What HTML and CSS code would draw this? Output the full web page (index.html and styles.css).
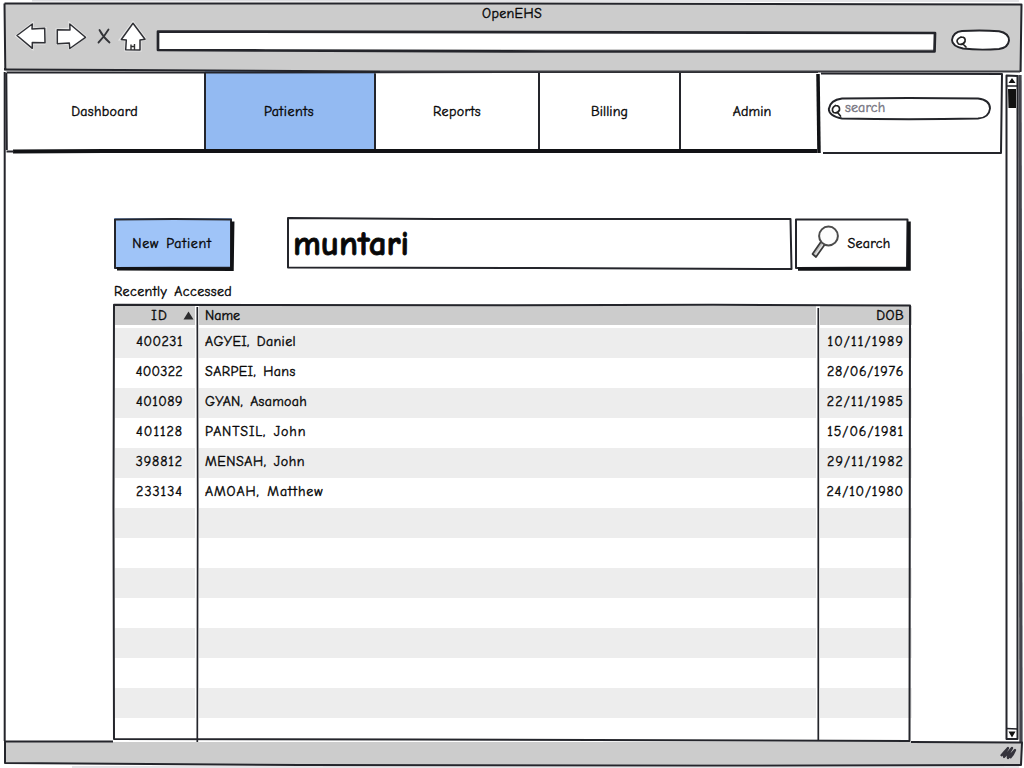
FILE: index.html
```html
<!DOCTYPE html>
<html lang="en">
<head>
<meta charset="utf-8">
<title>OpenEHS</title>
<link rel="stylesheet" href="styles.css">
</head>
<body>
<div class="window">
  <header class="chrome">
    <div class="title t-title">OpenEHS</div>
    <div class="toolbar">
      <svg class="nav-icons" width="132" height="36" viewBox="14 20 132 36">
        <g class="icon-halo"><path d="M17 36 32 24 32 29 45 28.500 44 43 32 43 32 48Z"/><path d="M57 30 70 29 70 24 85 37 70 48 69 43 57.500 43.500Z"/><path d="M133 23 121 39 126 39 126 50 140 50 140 40 145 39Z"/></g>
        <g class="icon"><path d="M17 35.500 32.300 24 32 29 44.700 28.300 45 42.700 32.300 42.500 32.300 48.300Z"/><path d="M57.300 29.700 70 30 69.800 24 85.500 37.300 69.800 48.500 69.300 43 57.300 43.800Z"/><path d="M133 23.300 121.300 39.500 126.300 40 125.700 49.700 140 50 140 40 145 39.300Z"/></g>
        <path class="cross" d="M98.500 42.500Q104 37 108.500 29.500M99.500 30Q103 37 109.500 42.500"/>
        <path class="icon-line" d="M131 50 131 44.500M131 46.500H134.500M134.500 44V50"/>
      </svg>
      <div class="address">
        <svg class="sketch"><path class="line l3" d="M2 1.500 779 3 778.500 21.500 390 21.500 110 20.500 2 20Z"/></svg>
      </div>
      <div class="chrome-search">
        <svg class="sketch"><path class="pill" d="M11 2Q30 .8 48 2.200Q58 4 58 11.500Q57 19 48 20Q28 21.500 12 19.500Q1 17 1 11Q2 3 11 2Z"/><path class="lens" d="M10 8Q15 8 14 12.500Q12 16.500 7.500 15Q3.500 11 10 8M12 15 15 18"/></svg>
      </div>
    </div>
  </header>

  <div class="body">
    <main class="page">
      <nav class="tabs">
        <a class="tab tab-dashboard"><span class="t-dashboard">Dashboard</span></a>
        <a class="tab tab-patients active"><span class="t-patients">Patients</span></a>
        <a class="tab tab-reports"><span class="t-reports">Reports</span></a>
        <a class="tab tab-billing"><span class="t-billing">Billing</span></a>
        <a class="tab tab-admin"><span class="t-admin">Admin</span></a>
        <div class="nav-search">
          <div class="search-pill"><span class="t-hint">search</span>
            <svg class="sketch"><path class="pill open" d="M14 1.500Q80 .5 150 1.500Q162 3 162 11.500Q161 21 150 21.500Q80 23 14 21.500Q.8 19 .8 12Q2 3 14 1.500Z"/><path class="lens" d="M7.500 8.500Q12 8.500 11.500 13Q9.500 17 5.500 15.500Q2.500 11.500 7.500 8.500M10 16 12.500 19"/></svg>
          </div>
        </div>
        <svg class="sketch">
          <path class="line" d="M1.500 1.500 200 1.500 500 1 813 1M1.300 2 1.800 79M200 1V80M370 1 370 80M534 1V80M675 1V80"/>
          <path class="shadow-line" d="M8 80.500 100 80 400 80 812 80"/>
          <path class="shadow-line s3" d="M813 3 814 82"/>
          <path class="line" d="M816 2.500 997 3 996 82 818 82M1.500 80.500H9"/>
        </svg>
      </nav>

      <section class="content">
        <div class="actions">
          <button class="btn new"><span class="t-new">New Patient</span>
            <svg class="sketch"><path class="line" d="M1 1.500 60 1 117 1.500 117 49.500 1 50Z"/><path class="shadow-line s3" d="M118.700 3.500 118 51.300 3 50.700"/></svg>
          </button>
          <div class="query"><span class="t-query">muntari</span>
            <svg class="sketch"><path class="line" d="M1 1 150 2 503.500 2 504.500 52 250 51 1 50.500Z"/></svg>
          </div>
          <button class="btn find">
            <svg class="magnifier" width="30" height="36"><path class="handle" d="M10.500 17 1.500 30 5 33 14.500 19.500"/><path class="handle-mid" d="M12.500 19.500 4.500 30.500"/><circle class="glass" cx="17.500" cy="12" r="9.400"/></svg>
            <span class="t-find">Search</span>
            <svg class="sketch"><path class="line" d="M1 1.500 112.500 1.500 112 49.500 1 50Z"/><path class="shadow-line s3" d="M114 3.500 114 51 3 51"/></svg>
          </button>
        </div>
        <h2 class="caption"><span class="t-caption">Recently Accessed</span></h2>
        <div class="table">
          <div class="row head"><div class="cell id"><span class="t-id">ID</span><svg class="sort" width="11" height="9"><path d="M5.500.5 10.500 8.500H.5Z"/></svg></div><div class="cell name"><span class="t-name">Name</span></div><div class="cell dob"><span class="t-dob">DOB</span></div></div>
          <div class="row r1"><div class="cell id">400231</div><div class="cell name">AGYEI, Daniel</div><div class="cell dob">10/11/1989</div></div>
          <div class="row r2"><div class="cell id">400322</div><div class="cell name">SARPEI, Hans</div><div class="cell dob">28/06/1976</div></div>
          <div class="row r3"><div class="cell id">401089</div><div class="cell name">GYAN, Asamoah</div><div class="cell dob">22/11/1985</div></div>
          <div class="row r4"><div class="cell id">401128</div><div class="cell name">PANTSIL, John</div><div class="cell dob">15/06/1981</div></div>
          <div class="row r5"><div class="cell id">398812</div><div class="cell name">MENSAH, John</div><div class="cell dob">29/11/1982</div></div>
          <div class="row r6"><div class="cell id">233134</div><div class="cell name">AMOAH, Matthew</div><div class="cell dob">24/10/1980</div></div>
          <div class="row"><div class="cell"></div><div class="cell"></div><div class="cell"></div></div>
          <div class="row"><div class="cell"></div><div class="cell"></div><div class="cell"></div></div>
          <div class="row"><div class="cell"></div><div class="cell"></div><div class="cell"></div></div>
          <div class="row"><div class="cell"></div><div class="cell"></div><div class="cell"></div></div>
          <div class="row"><div class="cell"></div><div class="cell"></div><div class="cell"></div></div>
          <div class="row"><div class="cell"></div><div class="cell"></div><div class="cell"></div></div>
          <div class="row"><div class="cell"></div><div class="cell"></div><div class="cell"></div></div>
          <svg class="sketch"><path class="line" d="M1 .8 400 1.300 600 .8 797 1.500 796.500 437 300 435.500 1 435 .5 200Z"/><path class="line thin" d="M84.300 3 84.700 200 84.300 438M705.300 4V436"/></svg>
        </div>
      </section>
    </main>
    <aside class="scrollbar">
      <svg class="sketch"><path class="line" d="M1.500 4.500 12.500 5 12.500 668 1.500 668Z"/><path class="line thin" d="M1 15H13M1 657.500 13 658"/><path class="solid" d="M7 7 10.500 12H3.500ZM3.500 660.500H10.500L7 666.500ZM3 18H11V37H3.500Z"/></svg>
    </aside>
  </div>

  <footer class="status">
    <svg class="grip" width="18" height="16"><path d="M2 11Q6 6 9 3Q4 11 5 12Q9 8 13 3Q8 11 9 13Q12 9 16 5Q14 10 11 13"/></svg>
  </footer>

  <svg class="sketch frame">
    <path class="soft" d="M32 .8 1019 1M72 767H1019"/>
    <path class="line" d="M4.500 3.500 500 3.500 1021.500 4.500 1020.500 72M4.500 3.500 5.300 70M4 69.500 120 70 380 71.500"/>
    <path class="line" d="M4.700 72V741"/>
    <path class="line side" d="M1020 75 1021 742"/>
    <path class="line" d="M113 741.500 5 741.500 5 763 300 765 700 765.500 1021 765 1022 742.500 911 742"/>
    <path class="line dim" d="M380 71.500H1020"/>
  </svg>
</div>
</body>
</html>
```
FILE: styles.css
```css
* { box-sizing: border-box; }
body {
  margin: 0;
  background: #fff;
  color: #080808;
  font: 500 14px/18px "Comic Sans MS", "Comic Neue", Inter, "Noto Sans", sans-serif;
  font-feature-settings: "cv11", "cv08", "tnum";
  -webkit-text-stroke: .4px currentColor;
  word-spacing: 2px;
}
.window { position: relative; width: 1024px; height: 768px; display: flex; flex-direction: column; overflow: hidden; background: #fff; }
.sketch { position: absolute; inset: 0; width: 100%; height: 100%; overflow: visible; pointer-events: none; }
.line { fill: none; stroke: #24252b; stroke-width: 2; stroke-linejoin: round; }
.l3 { stroke-width: 2.7; }
.thin { stroke-width: 1.7; }
.side { stroke: #44454d; stroke-width: 3.3; }
.dim { stroke: #3a3b40; }
.soft { fill: none; stroke: #dcdce0; stroke-width: 1.5; }
.shadow-line { fill: none; stroke: #111215; stroke-width: 4; }
.s3 { stroke-width: 3.5; }
.solid { fill: #111; }

.chrome { height: 71px; margin: 0 2px 0 5px; padding-top: 4px; background: #ccc; background-clip: content-box; }
.title { height: 18px; text-align: center; padding: 1px 3px 0 0; letter-spacing: .35px; }
.toolbar { display: flex; align-items: flex-start; padding-left: 9px; }
.nav-icons { margin: -2px 10px 0 0; }
.icon { fill: #fff; stroke: #303136; stroke-width: 1.5; stroke-linejoin: round; }
.icon-halo { fill: #fff; stroke: #e8e8e8; stroke-width: 3; }
.icon-line { fill: none; stroke: #333; stroke-width: 1.4; }
.cross { fill: none; stroke: #333438; stroke-width: 1.8; stroke-linecap: round; }
.address { position: relative; width: 780px; height: 21px; margin-top: 8px; background: #fff; background-clip: content-box; padding: 2px; }
.chrome-search { position: relative; width: 59px; height: 22px; margin: 7px 0 0 15px; }
.pill { fill: #fff; stroke: #24252a; stroke-width: 1.9; }
.open { fill: none; }
.lens { fill: none; stroke: #222; stroke-width: 1.7; stroke-linecap: round; }

.body { display: flex; height: 671px; padding-left: 5px; }
.page { width: 1000px; display: flex; flex-direction: column; }
.tabs { position: relative; display: flex; height: 82px; padding-left: 1px; }
.tab { display: flex; align-items: center; justify-content: center; height: 81px; padding-right: 2px; }
.tab-dashboard { width: 199px; }
.tab-patients { width: 170px; }
.tab-reports { width: 164px; padding-right: 0; }
.tab-billing { width: 141px; padding-right: 0; }
.tab-admin { width: 139px; padding-left: 5px; padding-right: 0; }
.active { background: #93baf2; }
.nav-search { padding: 26px 0 0 9px; }
.search-pill { position: relative; width: 163px; height: 24px; padding: 2px 0 0 17px; color: #777682; }

.content { padding: 64px 0 0 108px; }
.actions { display: flex; height: 53px; }
.btn { position: relative; display: flex; align-items: center; justify-content: center; height: 51px; border: 0; padding: 0; background: #fff; color: inherit; font: inherit; font-feature-settings: inherit; word-spacing: inherit; -webkit-text-stroke: inherit; }
.new { width: 118px; margin: 1px 55px 0 1px; padding-right: 2px; background: #9fc4f8; }
.query { position: relative; width: 505px; height: 52px; padding: 6px 0 0 6px; font: 700 35px/42px "Comic Sans MS", "Comic Neue", Inter, sans-serif; }
.find { width: 114px; margin: 1px 0 0 3px; gap: 6px; padding-right: 2px; }
.magnifier { margin-bottom: 4px; }
.glass { fill: #fdfdfd; stroke: #4c4c4c; stroke-width: 2; }
.handle { fill: #bbb; stroke: #3a3a3a; stroke-width: 1.7; stroke-linejoin: round; }
.handle-mid { stroke: #e6e6e6; stroke-width: 1.2; }
.caption { margin: 13px 0 3px 1px; font: inherit; font-feature-settings: inherit; }

.table { position: relative; width: 798px; height: 438px; padding: 2px 0 0 2px; display: flex; flex-direction: column; }
.row { display: grid; grid-template-columns: 80px 617px 92px; column-gap: 4px; height: 30px; flex: none; }
.row:nth-child(even) .cell { background: #ededed; }
.cell { display: flex; align-items: center; padding-bottom: 3px; white-space: pre; }
.head { height: 19px; margin-bottom: 3px; }
.head .cell { position: relative; background: #ccc; padding-bottom: 0; }
.id { justify-content: flex-end; padding-right: 12px; }
.head .id { padding-right: 1px; gap: 15px; }
.sort { fill: #2c2c2e; }
.name { padding-left: 6px; }
.dob { justify-content: flex-end; padding-right: 8px; }

.scrollbar { position: relative; width: 14px; height: 671px; }
.status { height: 22px; margin: 0 3px 0 5px; background: #ccc; display: flex; justify-content: flex-end; padding: 3px 4px 0 0; }
.grip path { fill: none; stroke: #35343c; stroke-width: 2.4; stroke-linejoin: round; }

/* Tracking per label */
.t-dashboard { letter-spacing: .3px; }
.t-patients { letter-spacing: .5px; }
.t-reports { letter-spacing: .35px; }
.t-billing, .t-admin { letter-spacing: .1px; }
.t-hint { letter-spacing: .15px; }
.t-new { letter-spacing: .7px; }
.t-find { letter-spacing: .3px; }
.t-caption { letter-spacing: .4px; }
.t-id { letter-spacing: 1.2px; }
.t-dob { letter-spacing: .4px; }
.t-query { -webkit-text-stroke: .8px currentColor; }
.r1 .id { letter-spacing: .5px; }
.r1 .name { letter-spacing: .35px; }
.r1 .dob { letter-spacing: 1.15px; }
.r2 .id { letter-spacing: .3px; }
.r2 .name { letter-spacing: .4px; }
.r2 .dob { letter-spacing: .7px; }
.r3 .id { letter-spacing: .5px; }
.r3 .name { letter-spacing: .3px; }
.r3 .dob { letter-spacing: 1.15px; }
.r4 .id { letter-spacing: 1px; }
.r4 .name { letter-spacing: .85px; }
.r4 .dob { letter-spacing: .95px; }
.r5 .id { letter-spacing: .9px; }
.r5 .name { letter-spacing: .55px; }
.r5 .dob { letter-spacing: 1.15px; }
.r6 .id { letter-spacing: 1px; }
.r6 .name { letter-spacing: .9px; }
.r6 .dob { letter-spacing: .85px; }
```
